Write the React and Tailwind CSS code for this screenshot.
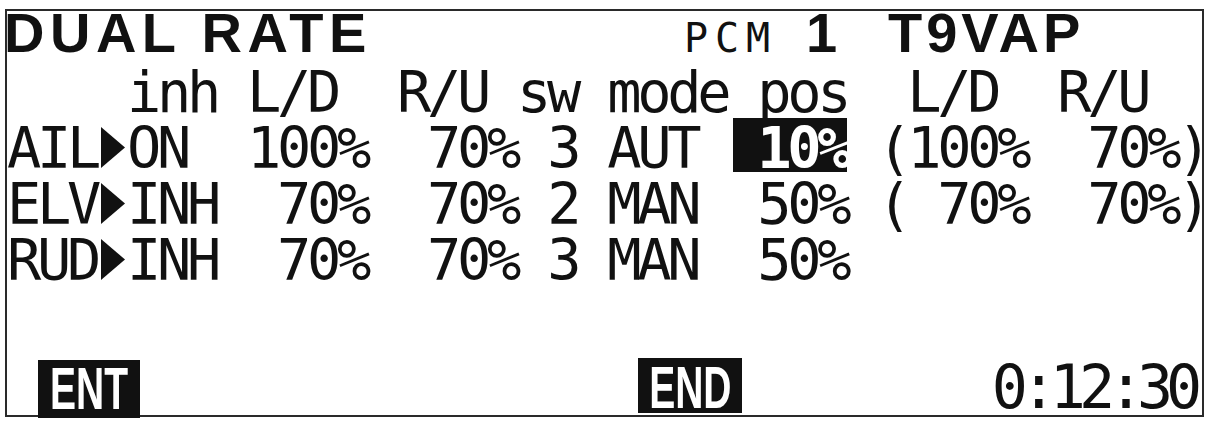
import React from "react";

// LCD character grid: every cell is 30px wide
const row = "h-[56px] leading-[56px] whitespace-pre text-[57px] tracking-[-4.31px]";
const heavy = "font-['Liberation_Sans',Arial,sans-serif] font-bold";

const Arrow = () => (
  <span className="inline-block w-[30px] h-[56px] align-top">
    <svg width="30" height="56" viewBox="0 0 30 56">
      <path d="M4 7 L28 27.5 L4 48 Z" fill="#111" />
    </svg>
  </span>
);

const Highlight = ({ children }) => (
  <span className="inline-block align-top ml-[6px] -mt-[2px] pl-[24px] h-[54px] leading-[60px] bg-[#111] text-white font-bold">
    {children}
  </span>
);

const SoftKey = ({ label, className, lead }) => (
  <div className={"bg-[#111] flex justify-center " + className}>
    <span className={"inline-block scale-x-[0.65] text-[60px] text-white " + lead + " " + heavy}>
      {label}
    </span>
  </div>
);

export default function App() {
  return (
    <div className="w-[1210px] h-[421px] bg-white overflow-hidden text-[#111] font-['DejaVu_Sans_Mono',monospace]">
      <div className="ml-[5px] mt-[9px] w-[1199px] h-[408px] border-2 border-[#2a2a2a] flex flex-col">

        {/* title line */}
        <div className="-mt-[6px] h-[56px] flex items-baseline">
          <span className={"w-[680px] shrink-0 -ml-[3px] text-[56px] leading-[56px] tracking-[5.5px] whitespace-pre " + heavy}>
            DUAL RATE
          </span>
          <span className="w-[122px] shrink-0 text-[40px] leading-[56px] tracking-[6.9px]">PCM</span>
          <span className={"w-[82px] shrink-0 text-[56px] leading-[56px] " + heavy}>1</span>
          <span className={"text-[56px] leading-[56px] tracking-[4px] " + heavy}>T9VAP</span>
        </div>

        {/* table */}
        <div className="mt-[3px]">
          <div className={row}>{"    inh L/D  R/U sw mode pos  L/D  R/U"}</div>
          <div className={row}>
            {"AIL"}<Arrow />{"ON  100%  70% 3 AUT "}<Highlight>10%</Highlight>{" (100%  70%)"}
          </div>
          <div className={row}>
            {"ELV"}<Arrow />{"INH  70%  70% 2 MAN  50% ( 70%  70%)"}
          </div>
          <div className={row}>
            {"RUD"}<Arrow />{"INH  70%  70% 3 MAN  50%"}
          </div>
        </div>

        {/* soft keys + timer */}
        <div className="mt-auto flex items-end">
          <SoftKey label="ENT" lead="leading-[58px]" className="ml-[31px] w-[102px] h-[58px] -mb-[3px]" />
          <SoftKey label="END" lead="leading-[55px] translate-y-[2px]" className="ml-[498px] w-[104px] h-[55px] mb-[2px]" />
          <span className="ml-auto mr-[7px] -mb-[2px] text-[60px] leading-[60px] tracking-[-7.1px]">
            0:12:30
          </span>
        </div>
      </div>
    </div>
  );
}
